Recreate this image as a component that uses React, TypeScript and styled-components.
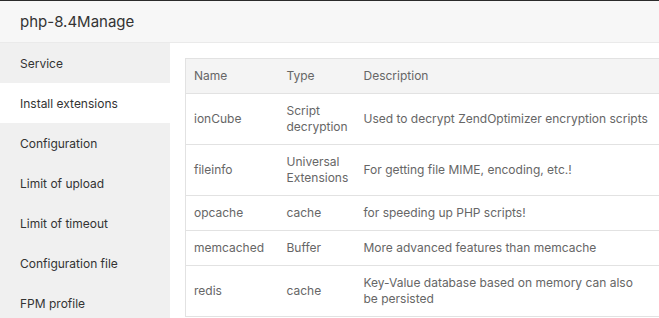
import React from 'react'
import styled, { createGlobalStyle } from 'styled-components'

const GlobalStyle = createGlobalStyle`
  html, body {
    margin: 0;
    padding: 0;
    background: #fff;
    overflow: hidden;
  }
  body {
    font-family: Inter, "Noto Sans", sans-serif;
  }
`

interface Extension {
  name: string
  type: string
  description: string
}

const extensions: Extension[] = [
  {
    name: 'ionCube',
    type: 'Script decryption',
    description: 'Used to decrypt ZendOptimizer encryption scripts',
  },
  {
    name: 'fileinfo',
    type: 'Universal Extensions',
    description: 'For getting file MIME, encoding, etc.!',
  },
  { name: 'opcache', type: 'cache', description: 'for speeding up PHP scripts!' },
  {
    name: 'memcached',
    type: 'Buffer',
    description: 'More advanced features than memcache',
  },
  {
    name: 'redis',
    type: 'cache',
    description: 'Key-Value database based on memory can also be persisted',
  },
]

const menu = [
  'Service',
  'Install extensions',
  'Configuration',
  'Limit of upload',
  'Limit of timeout',
  'Configuration file',
  'FPM profile',
]

const App: React.FC = () => {
  const active = 'Install extensions'
  return (
    <>
      <GlobalStyle />
      <StyledWindow>
        <StyledHeader>php-8.4Manage</StyledHeader>
        <StyledBody>
          <StyledSidebar>
            {menu.map((item) => (
              <StyledMenuItem key={item} $active={item === active}>
                {item}
              </StyledMenuItem>
            ))}
          </StyledSidebar>
          <StyledContent>
            <StyledTable>
              <colgroup>
                <col style={{ width: 93 }} />
                <col style={{ width: 77 }} />
                <col style={{ width: 309 }} />
              </colgroup>
              <thead>
                <tr>
                  <StyledTh>Name</StyledTh>
                  <StyledTh>Type</StyledTh>
                  <StyledTh>Description</StyledTh>
                </tr>
              </thead>
              <tbody>
                {extensions.map((ext) => (
                  <tr key={ext.name}>
                    <StyledTd>{ext.name}</StyledTd>
                    <StyledTd>{ext.type}</StyledTd>
                    <StyledTd>{ext.description}</StyledTd>
                  </tr>
                ))}
              </tbody>
            </StyledTable>
          </StyledContent>
        </StyledBody>
      </StyledWindow>
    </>
  )
}

const StyledWindow = styled.div`
  width: 659px;
  height: 318px;
  border-top: 1px solid #2b2b2b;
  box-sizing: border-box;
  display: flex;
  flex-direction: column;
  overflow: hidden;
`

const StyledHeader = styled.div`
  height: 41px;
  flex-shrink: 0;
  display: flex;
  align-items: center;
  padding-left: 20px;
  background: #f7f7f7;
  border-bottom: 1px solid #eaeaea;
  font-size: 15px;
  color: #333;
`

const StyledBody = styled.div`
  flex: 1;
  display: flex;
  min-height: 0;
`

const StyledSidebar = styled.div`
  width: 170px;
  flex-shrink: 0;
  background: #f0f0f0;
  display: flex;
  flex-direction: column;
`

const StyledMenuItem = styled.div<{ $active: boolean }>`
  height: 40px;
  flex-shrink: 0;
  display: flex;
  align-items: center;
  padding-left: 20px;
  font-size: 12px;
  color: #333;
  background: ${({ $active }) => ($active ? '#fff' : 'transparent')};
`

const StyledContent = styled.div`
  flex: 1;
  padding: 15px 0 0 15px;
  overflow: hidden;
`

const StyledTable = styled.table`
  width: 479px;
  border-collapse: collapse;
  table-layout: fixed;
  border: 1px solid #e2e2e2;
  font-size: 12px;
  color: #666;
`

const StyledTh = styled.th`
  text-align: left;
  font-weight: normal;
  background: #f4f4f4;
  padding: 9px 15px 9px 8px;
  line-height: 16px;
  border-bottom: 1px solid #e2e2e2;
`

const StyledTd = styled.td`
  padding: 9px 15px 9px 8px;
  line-height: 16px;
  border-bottom: 1px solid #e2e2e2;
  vertical-align: middle;
`

export default App
